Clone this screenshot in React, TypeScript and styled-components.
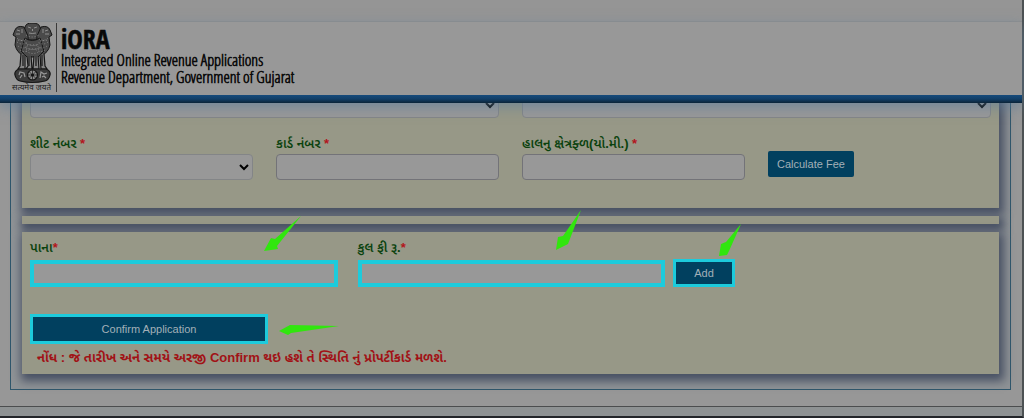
import React from "react";
import styled, { createGlobalStyle } from "styled-components";

const GlobalStyle = createGlobalStyle`
  *, *::before, *::after { box-sizing: border-box; }
  body {
    margin: 0;
    background: #8e9293;
    font-family: "Liberation Sans", "Noto Sans Gujarati", "Noto Sans", sans-serif;
    font-size: 13px;
    color: #0a420e;
  }
`;

const Page = styled.div`
  border-right: 2px solid #4d5254;
  border-bottom: 2px solid #23262a;
  padding-bottom: 9px;
`;

const TopStrip = styled.div`
  height: 22px;
  background: #959595;
  border-bottom: 1px solid #8f8f8f;
`;

const Header = styled.header`
  position: relative;
  z-index: 2;
  display: flex;
  padding: 1px 12px 11px;
  background:
    linear-gradient(#164b7c, #123f68 50%, #0b2438) bottom / 100% 8px no-repeat,
    #989898;
  box-shadow: 0 4px 12px rgba(90, 125, 155, 0.6);
`;

const Emblem = styled.div`
  width: 45px;
  border-right: 1px solid #3a3a3a;
  font-size: 8px;
  line-height: 8px;
  color: #1c1c1c;
  white-space: nowrap;
  svg { display: block; }
`;

const Brand = styled.div`
  padding: 3px 0 0 4px;
  color: #080808;
`;

const BrandName = styled.h1`
  margin: 0;
  font-family: "Open Sans Condensed", "Open Sans", sans-serif;
  font-size: 26px;
  line-height: 26px;
  font-weight: 700;
  -webkit-text-stroke: 0.5px #080808;
`;

const BrandLine = styled.p`
  margin: 0;
  font-family: "Open Sans Condensed Light", "Open Sans Condensed", sans-serif;
  font-size: 16px;
  line-height: 17px;
  font-weight: 400;
  -webkit-text-stroke: 0.6px #080808;
`;

const Body = styled.main`
  margin-top: -19px;
  padding: 0 11px 16px 10px;
  background: #979797;
  border-bottom: 1px solid #4b4d4e;
`;

const Frame = styled.div`
  display: flex;
  flex-direction: column;
  gap: 8px;
  padding: 0 11px 15px;
  border: 1px solid #2f566b;
  border-top: 0;
  background: #8f9396;
`;

const Panel = styled.section<{ $pad?: string }>`
  padding: ${(p) => p.$pad ?? "4px 8px"};
  background: #979887;
  box-shadow: 2px 4px 9px 3px #475063;
`;

const FieldGrid = styled.div`
  display: grid;
  grid-template-columns: repeat(4, 1fr);
  column-gap: 23px;
`;

const Field = styled.div<{ $span?: number }>`
  position: relative;
  display: flex;
  flex-direction: column;
  grid-column: span ${(p) => p.$span ?? 1};
`;

const Label = styled.label`
  font-size: 13px;
  line-height: 16px;
  font-weight: 600;
  margin: 18px 0 2px;
  white-space: nowrap;
`;

const FeeLabel = styled(Label)`
  margin: 0 0 4px;
`;

const Star = styled.span`
  color: #b3141c;
`;

const control = `
  width: 100%;
  height: 26px;
  margin: 0;
  background: #989898;
  border: 1px solid #737378;
  border-radius: 4px;
  font: inherit;
  color: #000;
`;

const Select = styled.select`
  ${control}
  border-color: #838587;
`;

const Input = styled.input`
  ${control}
`;

const MarkedInput = styled(Input)`
  height: 27px;
  border: 4px solid #1dcbdc;
  border-radius: 0;
`;

const Button = styled.button`
  height: 26px;
  padding: 0 9px;
  border: 0;
  border-radius: 2px;
  background: #01405f;
  color: #a3b0b8;
  font: inherit;
  font-size: 11px;
`;

const CalcSlot = styled.div`
  padding-top: 33px;
`;

const MarkedButton = styled(Button)<{ $width: number; $height: number }>`
  display: block;
  width: ${(p) => p.$width}px;
  height: ${(p) => p.$height}px;
  padding: 0;
  border: 3px solid #1dcbdc;
  border-radius: 0;
`;

const FeeRow = styled.div`
  display: flex;
  gap: 20px;
  & > ${Field} { flex: 0 0 32%; }
`;

const AddSlot = styled.div`
  position: relative;
  align-self: flex-end;
  margin-left: -12px;
`;

const ConfirmRow = styled.div`
  position: relative;
  width: max-content;
  margin-top: 27px;
`;

const Note = styled.p`
  margin: 5px 0 0 7px;
  font-size: 13px;
  line-height: 18px;
  font-weight: 700;
  color: #a11216;
`;

const Arrow = styled.svg<{ $left: number; $top: number }>`
  position: absolute;
  left: ${(p) => p.$left}px;
  top: ${(p) => p.$top}px;
  z-index: 1;
  fill: #31e60e;
  pointer-events: none;
`;

const Lions = () => (
  <svg width="42" height="61" viewBox="0 0 42 61" fill="none" stroke="#161616">
    <g fill="#4a4a4a">
      <path d="M13 4Q14 0 20 0Q27 0 28 4L30 12L26 17H15L11 12Z" />
      <path d="M12 4Q5 2 3 7L1 12L4 14L3 22Q5 30 11 32L17 30L16 13Z" />
      <path d="M29 4Q36 2 38 7L40 12L37 14L38 22Q36 30 30 32L24 30L25 13Z" />
      <path d="M13 15Q20 20 28 15L32 28L26 34H15L9 28Z" />
    </g>
    <g strokeWidth="1" stroke="#8a8a8a" strokeDasharray="1 2">
      <path d="M5 15Q9 19 14 16M5 19Q10 23 15 19M6 23Q11 27 16 23M8 27Q12 30 17 27M36 15Q32 19 27 16M36 19Q31 23 26 19M35 23Q30 27 25 23M33 27Q29 30 24 27M14 20Q21 25 28 20M13 24Q21 29 29 24M14 28Q21 33 28 28M14 12Q20 16 27 12M6 17L13 18M28 18L36 17M15 22L27 22M14 26H28" />
    </g>
    <g stroke="#8f8f8f">
      <path d="M16 4L19 5M25 4L22 5M20.500 6V8M17 10Q20 11 24 10M5 7L8 8M36 7L33 8M4 11H8M37 11H33M10 6V10M31 6V10" />
    </g>
    <g strokeWidth="1.200">
      <path fill="#858585" d="M9 31L8 43L6 46H13L13 32M15 33L16 43L14 46H20L19 33M22 33L21 46H27L26 33M28 32L29 46H35L33 43L32 31" />
      <path d="M11 32V43M17 33V43M24 33V43M30 32V43" />
      <path fill="#3c3c3c" d="M7 46H34Q39 48 38 52Q37 57 33 58Q20 61 8 58Q4 57 3 52Q2 48 7 46Z" />
      <circle cx="20.500" cy="52" r="5" fill="#8c8c8c" />
      <circle cx="20.500" cy="52" r="1" fill="#222" />
      <path strokeWidth="0.700" d="M16 52H25M20.500 47V57M17.500 49L23.500 55M23.500 49L17.500 55" />
      <path stroke="#999" d="M7 52L8 49L12 50L13 54M8 55L10 52M28 55L29 49L32 51L35 50M30 54L32 53L34 55" />
    </g>
  </svg>
);

export default function App() {
  return (
    <>
      <GlobalStyle />
      <Page>
        <TopStrip />
        <Header>
          <Emblem>
            <Lions />
            सत्यमेव जयते
          </Emblem>
          <Brand>
            <BrandName>iORA</BrandName>
            <BrandLine>Integrated Online Revenue Applications</BrandLine>
            <BrandLine>Revenue Department, Government of Gujarat</BrandLine>
          </Brand>
        </Header>
        <Body>
          <Frame>
            <Panel $pad="8px 8px 28px">
              <FieldGrid>
                <Field $span={2}>
                  <Select aria-label="તાલુકો" />
                </Field>
                <Field $span={2}>
                  <Select aria-label="વોર્ડ" />
                </Field>
                <Field>
                  <Label htmlFor="sheet">શીટ નંબર <Star>*</Star></Label>
                  <Select id="sheet" />
                </Field>
                <Field>
                  <Label htmlFor="card">કાર્ડ નંબર <Star>*</Star></Label>
                  <Input id="card" />
                </Field>
                <Field>
                  <Label htmlFor="area">હાલનુ ક્ષેત્રફ્ળ(યો.મી.) <Star>*</Star></Label>
                  <Input id="area" />
                </Field>
                <CalcSlot>
                  <Button type="button">Calculate Fee</Button>
                </CalcSlot>
              </FieldGrid>
            </Panel>
            <Panel />
            <Panel $pad="8px 8px 7px">
              <FeeRow>
                <Field>
                  <FeeLabel htmlFor="pages">પાના<Star>*</Star></FeeLabel>
                  <MarkedInput id="pages" />
                  <Arrow $left={234} $top={-24} width="38" height="36">
                    <path d="M37 0L13 30L14 33L0 35L7 22L11 23Z" />
                  </Arrow>
                </Field>
                <Field>
                  <FeeLabel htmlFor="fee">કુલ ફી રૂ.<Star>*</Star></FeeLabel>
                  <MarkedInput id="fee" />
                  <Arrow $left={198} $top={-30} width="26" height="41">
                    <path d="M25 0L12 34L0 40L2 27L7 26Z" />
                  </Arrow>
                </Field>
                <AddSlot>
                  <MarkedButton $width={62} $height={28} type="button">Add</MarkedButton>
                  <Arrow $left={46} $top={-35} width="23" height="33">
                    <path d="M22 0L10 27L8 31L0 32L2 20L7 18Z" />
                  </Arrow>
                </AddSlot>
              </FeeRow>
              <ConfirmRow>
                <MarkedButton $width={238} $height={30} type="button">Confirm Application</MarkedButton>
                <Arrow $left={249} $top={11} width="61" height="11">
                  <path d="M60 1L11 0L0 6L9 10L12 8Z" />
                </Arrow>
              </ConfirmRow>
              <Note>નોંધ : જે તારીખ અને સમયે અરજી Confirm થઇ હશે તે સ્થિતિ નું પ્રોપર્ટીકાર્ડ મળશે.</Note>
            </Panel>
          </Frame>
        </Body>
      </Page>
    </>
  );
}
